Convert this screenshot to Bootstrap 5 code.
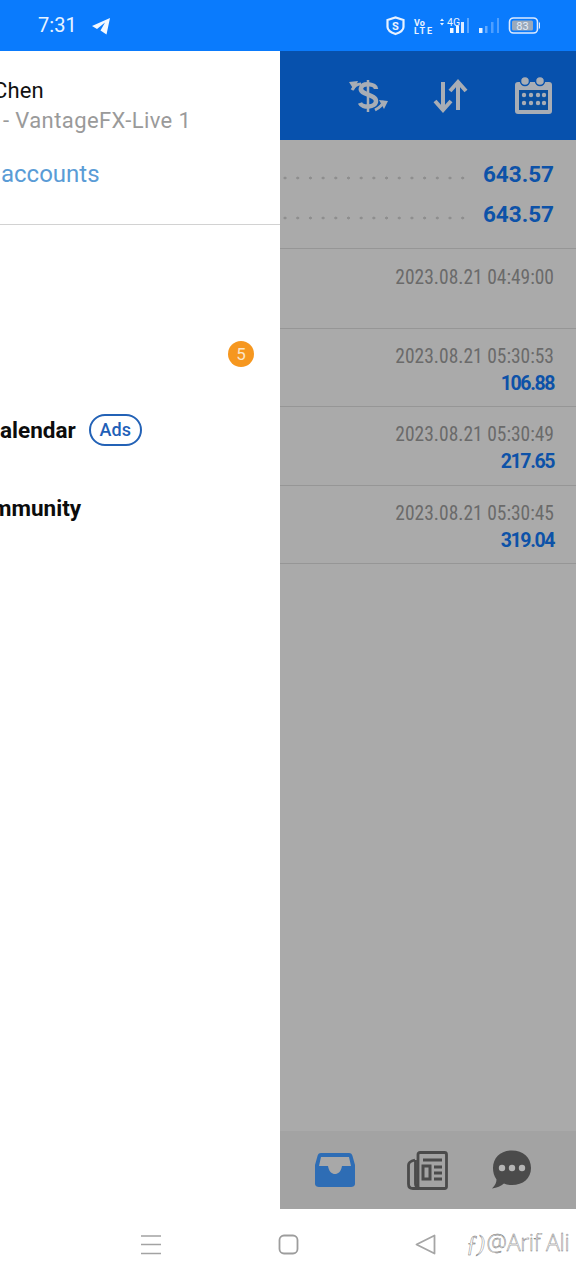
<!DOCTYPE html>
<html lang="en"><head><meta charset="utf-8"><title>Trade history</title>
<link href="https://cdn.jsdelivr.net/npm/bootstrap@5.3.0/dist/css/bootstrap.min.css" rel="stylesheet">
<style>
html,body{margin:0;height:1280px;overflow:hidden;background:#fff}
body{font-family:Roboto,"Liberation Sans",sans-serif}
.shell{width:576px;height:1280px;overflow:hidden}
.statusline{height:51px;background:#0a7bfd;color:#fff;flex:none}
.clock{font-size:20px;letter-spacing:.1px;margin-left:38px;line-height:50px;color:#e8f3ff}
.tg{margin-left:14px}
.stat-right{margin-left:auto;padding-right:36px}
.app{height:1158px;flex:none}
.drawer{width:280px;background:#fff;flex:none;overflow:hidden}
.acct{height:174px;border-bottom:1px solid #d2d2d2;flex:none}
.who{font-size:22px;line-height:26px;color:#111;margin-top:27px;margin-left:-7px;white-space:nowrap;letter-spacing:.1px}
.srv{font-size:22px;line-height:26px;color:#9a9a9a;margin-top:4px;margin-left:3px;letter-spacing:.4px}
.manage{font-size:24px;line-height:28px;color:#5a9cd6;margin-top:26px;margin-left:1px}
.menu-b{height:78px;padding-right:26px;margin-top:90px}
.dotb{width:26px;height:26px;background:#f6971f;color:#fbe6c8;font-size:17px;line-height:26px;text-align:center;border-radius:50%}
.menu-c{margin-top:-7px;height:88px;gap:13px}
.menu-t{font-size:22.500px;font-weight:700;line-height:26px;color:#0c0c0c;white-space:nowrap}
.adsp{width:53px;height:32px;border:2px solid #2362b6;border-radius:16px;color:#1f5fb8;font-size:18px;font-weight:500;line-height:28px;text-align:center}
.menu-d{margin-top:14px;height:40px}
.shift2{margin-left:-8px}
.pane{flex:1 1 auto;background:#aaaaaa;min-width:0}
.appbar{height:89px;background:#0751ad;flex:none}
.appbar svg{flex:none}
.sumrows{height:109px;border-bottom:1px solid #969696;flex:none;padding-top:14px}
.sumline{height:40px;padding-right:22px}
.dots{flex:1;height:4px;margin:8px 16px 0 0;background-image:radial-gradient(circle,#8e8e8e 1.3px,transparent 1.7px);background-size:12.7px 4px;background-position:-1.300px 0}
.amt{font-size:22.500px;font-weight:700;color:#0d52a8;line-height:26px}
.deal{border-bottom:1px solid #969696;padding:15px 22px 0 0;text-align:right;flex:none}
.dt{font-size:19.500px;line-height:28px;color:#6a6a6a;font-stretch:condensed}
.pf{font-size:19.500px;font-weight:700;line-height:26px;color:#0d52a8;letter-spacing:-1.400px}
.h-a{height:80px}.h-b{height:78px;padding-top:14px}.h-c{height:79px;padding-top:14px}
.spring{flex:1 1 auto}
.tabs{height:78px;background:#a3a3a3;flex:none;padding-left:35px}
.softkeys{height:71px;background:#fff;flex:none;position:relative}
.softkeys svg{position:absolute}
.wmark{position:absolute;left:466px;top:19px;font-family:"Open Sans",sans-serif;font-weight:300;font-size:23px;line-height:28px;letter-spacing:-.3px;color:#fff;-webkit-text-stroke:.4px #666;white-space:nowrap}
.wmark i{font-family:"Liberation Serif",serif;font-size:23px;margin-right:2px}
</style></head><body>
<div class="shell d-flex flex-column">
 <div class="statusline d-flex align-items-start">
  <span class="clock">7:31</span>
  <svg class="tg" style="margin-top:17px" width="20" height="18" viewBox="0 0 20 18"><path d="M1 9 19 1 15.500 17.500 9.500 13.500 14 5.500 6 12Z" fill="#f2f8ff"/></svg>
  <div class="stat-right d-flex">
   <svg width="163" height="51" viewBox="0 0 163 51" fill="none">
    <path d="M10.500 20 18.500 17.500 26.500 20V27C26.500 30 23 32.500 18.500 34 14 32.500 10.500 30 10.500 27Z" stroke="#e8f2ff" stroke-width="2.200"/>
    <text x="18.500" y="30" font-family="Roboto,sans-serif" font-size="11" font-weight="700" fill="#e8f2ff" text-anchor="middle">S</text>
    <text x="37" y="25.500" font-family="Roboto,sans-serif" font-size="9" font-weight="700" fill="#eaf3ff">Vo</text>
    <text x="37" y="33.500" font-family="Roboto,sans-serif" font-size="9" font-weight="700" fill="#eaf3ff" textLength="18">LTE</text>
    <text x="70" y="26" font-family="Roboto,sans-serif" font-size="10.500" fill="#eaf3ff">4G</text>
    <path d="M63 21l2 -2.500 2 2.500zM63 23l2 2.500 2 -2.500z" fill="#eaf3ff"/>
    <rect x="73" y="28" width="3.500" height="5" fill="#f2f8ff"/><rect x="79" y="26" width="3" height="7" fill="#f2f8ff"/><rect x="84" y="22" width="3" height="11" fill="#dbeaff"/><rect x="90" y="18" width="2" height="15" fill="#5aa6ff"/>
    <rect x="102" y="28" width="3.500" height="5" fill="#e8f2ff"/><rect x="108" y="26" width="2.500" height="7" fill="#63abff"/><rect x="114" y="22" width="2.500" height="11" fill="#4e9fff"/><rect x="120" y="18" width="2" height="15" fill="#4e9fff"/>
    <rect x="132.500" y="18" width="28" height="15" rx="4" stroke="#dceaff" stroke-width="1.600"/><rect x="135" y="20.500" width="21" height="10" rx="1.500" fill="#9aa9bb"/><rect x="162" y="22.500" width="1" height="6" fill="#dceaff"/>
    <text x="145.500" y="29.500" font-family="Roboto,sans-serif" font-size="11" fill="#e4edf8" text-anchor="middle">83</text>
   </svg>
  </div>
 </div>
 <div class="app d-flex">
  <div class="drawer d-flex flex-column">
   <div class="acct">
    <div class="who">Chen</div>
    <div class="srv">- VantageFX-Live 1</div>
    <div class="manage">accounts</div>
   </div>
   <div class="menu-b d-flex align-items-center justify-content-end"><span class="dotb">5</span></div>
   <div class="menu-c d-flex align-items-center"><span class="menu-t">alendar</span><span class="adsp">Ads</span></div>
   <div class="menu-d d-flex align-items-center"><span class="menu-t shift2">mmunity</span></div>
  </div>
  <div class="pane d-flex flex-column">
   <div class="appbar d-flex">
    <svg width="296" height="89" viewBox="0 0 296 89" fill="none" stroke="#a8adb5">
     <path d="M88 29V61" stroke-width="2.500"/>
     <path d="M96 38C96 33 83 31 81 37 79 44 96 43 96 50 96 57 82 57 80 52" stroke-width="4.500"/>
     <path d="M81 33C76 33 74 35 72 39M104 50C102 55 99 57 95 59" stroke-width="3"/>
     <path d="M69 31 78 30 74 39ZM99 49 108 50 104 58Z" fill="#a8adb5" stroke="none"/>
     <path d="M163 31V59M155 50 163 59 171 50M178 59V31M170 40 178 31 186 40" stroke-width="4"/>
     <rect x="235" y="31" width="37" height="32" rx="3" fill="#a8adb5" stroke="none"/>
     <circle cx="245" cy="30" r="4.500" fill="#a8adb5" stroke="#0751ad" stroke-width="1.500"/><circle cx="260" cy="30" r="4.500" fill="#a8adb5" stroke="#0751ad" stroke-width="1.500"/>
     <rect x="239" y="39" width="29" height="20" fill="#0a4f9e" stroke="none"/>
     <g fill="#a8adb5" stroke="none"><circle cx="244" cy="44" r="2.200"/><circle cx="251" cy="44" r="2.200"/><circle cx="258" cy="44" r="2.200"/><circle cx="264" cy="44" r="2.200"/><circle cx="244" cy="52" r="2.200"/><circle cx="251" cy="52" r="2.200"/><circle cx="258" cy="52" r="2.200"/><circle cx="264" cy="52" r="2.200"/></g>
    </svg>
   </div>
   <div class="sumrows">
    <div class="sumline d-flex align-items-center"><span class="dots"></span><span class="amt">643.57</span></div>
    <div class="sumline d-flex align-items-center"><span class="dots"></span><span class="amt">643.57</span></div>
   </div>
   <div class="deal h-a"><div class="dt">2023.08.21 04:49:00</div></div>
   <div class="deal h-b"><div class="dt">2023.08.21 05:30:53</div><div class="pf">106.88</div></div>
   <div class="deal h-c"><div class="dt">2023.08.21 05:30:49</div><div class="pf">217.65</div></div>
   <div class="deal h-b"><div class="dt">2023.08.21 05:30:45</div><div class="pf">319.04</div></div>
   <div class="spring"></div>
   <div class="tabs d-flex align-items-center">
    <svg width="40" height="36" viewBox="0 0 40 36"><path d="M6 1H34C36 1 37 2 37.500 4L40 13V32C40 34 38 35 36 35H4C2 35 0 34 0 32V13L2.500 4C3 2 4 1 6 1Z" fill="#2e6db5"/><path d="M6 5H34L36 14H27C26 20 23 22 20 22 17 22 14 20 13 14H4Z" fill="#a8a8a8"/></svg>
    <svg style="margin-left:52px" width="41" height="39" viewBox="0 0 41 39" fill="none" stroke="#4b4b4b" stroke-width="2.800"><rect x="11" y="1.500" width="28.500" height="36" rx="2"/><path d="M8 9C4 10 1.500 11 1.500 14V33C1.500 36 3 37.500 6 37.500H12C9 36 8.500 35 8.500 33V9"/><path d="M16 9H35M27 16H35M27 22H35M27 28H35"/><rect x="16" y="15" width="7" height="13" stroke-width="3"/></svg>
    <svg style="margin-left:44px" width="40" height="40" viewBox="0 0 40 40"><path d="M20 .5C31 .5 39 7.500 39 18S31 35 20 35C17 35 14 34.500 12 33.500 9 36 5 38 0 38.500 3.500 35 4.500 32 4.500 29.500 2 26 1 22 1 18 1 7.500 9 .5 20 .5Z" fill="#4b4b4b"/><g fill="#b5b5b5"><circle cx="10" cy="18" r="3.200"/><circle cx="20" cy="18" r="3.200"/><circle cx="30" cy="18" r="3.200"/></g></svg>
   </div>
  </div>
 </div>
 <div class="softkeys">
  <svg style="left:140px;top:25px" width="22" height="21" fill="none" stroke="#a3a3a3" stroke-width="1.600"><path d="M1 2H21M1 10.500H21M1 19.500H21"/></svg>
  <svg style="left:278px;top:25px" width="21" height="21" fill="none" stroke="#9d9d9d" stroke-width="1.800"><rect x="1.500" y="1.500" width="18" height="18" rx="4.500"/></svg>
  <svg style="left:415px;top:25px" width="21" height="21" fill="none" stroke="#a5a5a5" stroke-width="1.800"><path d="M19.500 1.500V19.500L1.500 10.500Z" stroke-linejoin="round"/></svg>
  <span class="wmark"><i>ƒ)</i>@Arif Ali</span>
 </div>
</div>
<script src="https://cdn.jsdelivr.net/npm/bootstrap@5.3.0/dist/js/bootstrap.bundle.min.js"></script>
</body></html>
